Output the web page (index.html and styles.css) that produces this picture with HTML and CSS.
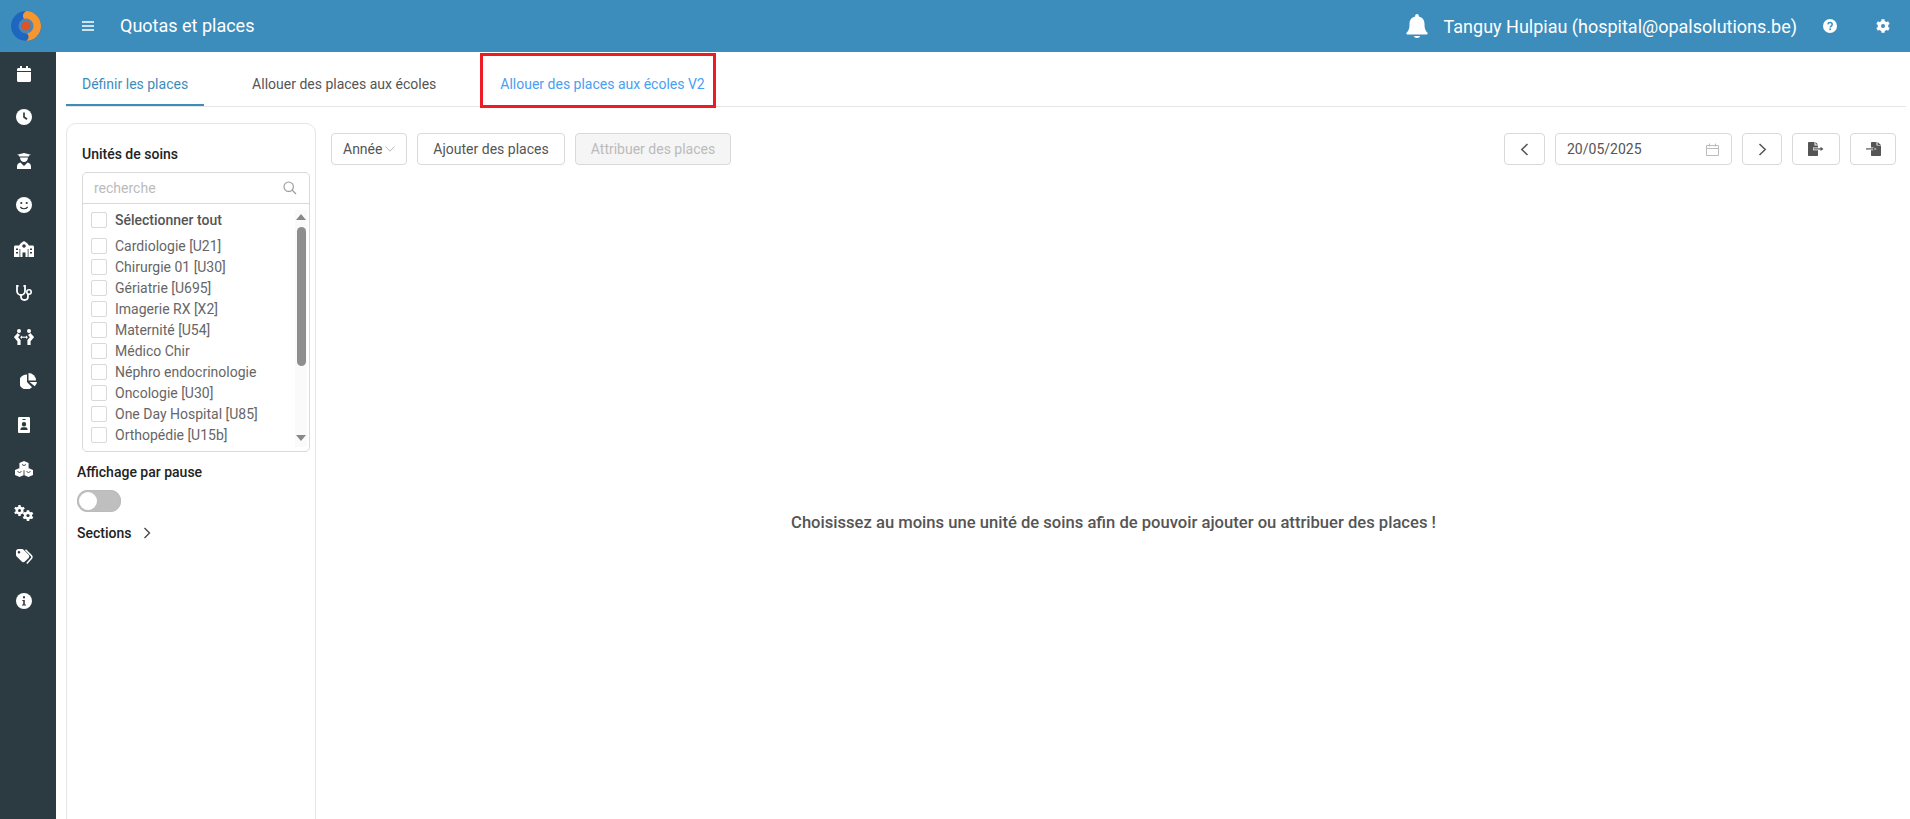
FILE: index.html
```html
<!DOCTYPE html>
<html lang="fr">
<head>
<meta charset="utf-8">
<title>Quotas et places</title>
<link rel="stylesheet" href="styles.css">
</head>
<body>
<div class="app">
  <header class="topbar">
    <div class="logo">
      <svg width="30" height="30" viewBox="0 0 30 30">
        <circle cx="15" cy="15" r="15" fill="#1f66c0"/>
        <path d="M15 0a15 15 0 0 1 0 30c3-2 3.500-5 1-7.500-1-1-1-1.500 0-2.500 5-2 5-8 0-10-2-1-4-2-4-5 0-2 1-3.500 3-5z" fill="#f7962e"/>
        <circle cx="15" cy="15" r="7.500" fill="#4a86b8"/>
        <circle cx="15" cy="15" r="4.500" fill="#dc5426"/>
      </svg>
    </div>
    <svg class="burger" width="12" height="10" viewBox="0 0 12 10"><path d="M0 1h12M0 5h12M0 9h12" stroke="#fff" stroke-width="1.400"/></svg>
    <h1 class="page-title">Quotas et places</h1>
    <div class="top-right">
      <svg class="bell" width="22" height="24" viewBox="0 0 22 24"><path d="M11 0c1 0 1.800.8 1.800 1.800v.8c3.800.8 5.700 3.700 5.700 7.400 0 5 1 6.500 3 8.800.5.600.1 1.700-.8 1.700H1.300c-.9 0-1.300-1.100-.8-1.700 2-2.300 3-3.800 3-8.800 0-3.700 1.900-6.600 5.700-7.400v-.8C9.200.8 10 0 11 0zM8 22h6c0 1.200-1.300 2-3 2s-3-.8-3-2z" fill="#fff"/></svg>
      <span class="user">Tanguy Hulpiau (hospital@opalsolutions.be)</span>
      <svg class="help" width="14" height="14" viewBox="0 0 14 14"><circle cx="7" cy="7" r="7" fill="#fff"/><path d="M4.800 5.300C5 4.200 5.900 3.500 7 3.500c1.300 0 2.200.8 2.200 1.900 0 1.700-2 1.600-2 3.100" fill="none" stroke="#3c8dbc" stroke-width="1.500"/><rect x="6.300" y="9.400" width="1.700" height="1.700" fill="#3c8dbc"/></svg>
      <svg class="gear" width="14" height="14" viewBox="0 0 14 14"><path d="M7 .2v13.600M1.100 3.600l11.800 6.800M12.900 3.600 1.100 10.400" stroke="#fff" stroke-width="3.200"/><circle cx="7" cy="7" r="5.300" fill="#fff"/><circle cx="7" cy="7" r="2" fill="#3c8dbc"/></svg>
    </div>
  </header>

  <div class="layout">
    <nav class="sidebar">
      <a class="nav-item"><svg width="14" height="16" viewBox="0 0 14 16"><path d="M3 0h2v2h4V0h2v2h1.500C13.300 2 14 2.700 14 3.500V5H0V3.500C0 2.700.7 2 1.500 2H3zM0 6h14v8.500c0 .8-.7 1.500-1.500 1.500h-11C.7 16 0 15.300 0 14.500z" fill="#fff"/></svg></a>
      <a class="nav-item"><svg width="16" height="16" viewBox="0 0 16 16"><circle cx="8" cy="8" r="8" fill="#fff"/><path d="M8 3.500V8l3 2.200" fill="none" stroke="#2c3b41" stroke-width="1.700"/></svg></a>
      <a class="nav-item"><svg width="14" height="16" viewBox="0 0 14 16"><path d="M0 1.800 7 0l7 1.800-2 .6v1.200H2V2.400z" fill="#fff"/><path d="M3 4.500h8C11 7 9.300 9 7 9S3 7 3 4.500zM3.500 9.500 7 13l3.500-3.500c2 .3 3.500 2 3.500 4V16H0v-2.500c0-2 1.500-3.700 3.500-4z" fill="#fff"/></svg></a>
      <a class="nav-item"><svg width="16" height="16" viewBox="0 0 16 16"><circle cx="8" cy="8" r="8" fill="#fff"/><circle cx="5.300" cy="6" r="1.100" fill="#2c3b41"/><circle cx="10.700" cy="6" r="1.100" fill="#2c3b41"/><path d="M4.300 10c2 2.300 5.400 2.300 7.400 0" fill="none" stroke="#2c3b41" stroke-width="1.200"/></svg></a>
      <a class="nav-item"><svg width="20" height="16" viewBox="0 0 20 16"><path d="M0 6c0-.8.600-1.500 1.300-1.500H5L7 2l3-2 3 2 2 2.500h3.700c.7 0 1.300.7 1.300 1.500v10H0z" fill="#fff"/><circle cx="10" cy="5" r="1.800" fill="#2c3b41"/><path d="M8.500 11.500h3V16h-3zM2 7.500h2V9H2zM2 11h2v1.500H2zM16 7.500h2V9h-2zM16 11h2v1.500h-2zM5.500 8h.8v8h-.8zM13.700 8h.8v8h-.8z" fill="#2c3b41"/></svg></a>
      <a class="nav-item"><svg width="17" height="16" viewBox="0 0 17 16"><path d="M2.500 1H1v5c0 2.500 2 4 4 4s4-1.500 4-4V1H7.500" fill="none" stroke="#fff" stroke-width="1.800"/><path d="M5 10v1.500C5 13.700 6.500 15 8.500 15s3.500-1.300 3.500-3.500V9" fill="none" stroke="#fff" stroke-width="1.800"/><circle cx="13" cy="7" r="2.200" fill="none" stroke="#fff" stroke-width="1.600"/></svg></a>
      <a class="nav-item"><svg width="20" height="16" viewBox="0 0 20 16"><circle cx="5" cy="2" r="2" fill="#fff"/><circle cx="15" cy="2" r="2" fill="#fff"/><path d="M4.800 5 2 8.200l3 3.500V16M15.200 5 18 8.200l-3 3.500V16" fill="none" stroke="#fff" stroke-width="3.200"/><path d="M7 8.200h6" stroke="#fff" stroke-width="1.200"/><path d="M8 6.500 6 8.200l2 1.700zM12 6.500l2 1.700-2 1.700z" fill="#fff"/></svg></a>
      <a class="nav-item nav-pie"><svg width="17" height="16" viewBox="0 0 17 16"><path d="M7 1.500V9l5 5.200A7.500 7.500 0 1 1 7 1.500z" fill="#fff"/><path d="M8.500 0A7.500 7.500 0 0 1 16 7.500H8.500z" fill="#fff"/><path d="M9.500 9H17a7.500 7.500 0 0 1-2.300 4.300z" fill="#fff"/></svg></a>
      <a class="nav-item"><svg width="12" height="16" viewBox="0 0 12 16"><path fill-rule="evenodd" d="M1.200 0h9.600C11.500 0 12 .6 12 1.300v13.400c0 .7-.5 1.300-1.200 1.300H1.200C.5 16 0 15.400 0 14.700V1.300C0 .6.500 0 1.200 0zM4.500 2v1h3V2zM6 5a2.200 2.200 0 1 0 0 4.400A2.200 2.200 0 0 0 6 5zM2.500 13h7v-1c0-1-1-1.800-2-1.800h-3c-1 0-2 .8-2 1.800z" fill="#fff"/></svg></a>
      <a class="nav-item"><svg width="18" height="16" viewBox="0 0 18 16"><path d="M9 0l4.600 2v5L9 9 4.400 7V2zM4.600 7l4.400 2v5l-4.400 2L0 14V9zM13.400 7 18 9v5l-4.600 2L9 14V9z" fill="#fff"/><path d="M7 3.500 9 4.500l2-1M2.500 10.500l2 1 2-1M11.500 10.500l2 1 2-1M9 9.300v4.700" fill="none" stroke="#2c3b41" stroke-width=".9"/></svg></a>
      <a class="nav-item"><svg width="20" height="16" viewBox="0 0 20 16"><path d="M5.500 0v11M.8 2.800l9.400 5.400M10.200 2.800.8 8.200" stroke="#fff" stroke-width="2.400"/><circle cx="5.500" cy="5.500" r="3.900" fill="#fff"/><circle cx="5.500" cy="5.500" r="1.500" fill="#2c3b41"/><path d="M14 5v11M9.200 7.700l9.600 5.600M18.800 7.700l-9.600 5.600" stroke="#2c3b41" stroke-width="4"/><path d="M14 5.200v10.800M9.300 7.800l9.400 5.400M18.700 7.800l-9.400 5.400" stroke="#fff" stroke-width="2.600"/><circle cx="14" cy="10.500" r="4" fill="#fff"/><circle cx="14" cy="10.500" r="1.600" fill="#2c3b41"/></svg></a>
      <a class="nav-item"><svg width="17" height="16" viewBox="0 0 17 16"><path fill-rule="evenodd" d="M0 2.300C0 1 1 0 2.300 0H6c.6 0 1.200.2 1.600.7l5 5c.9.900.9 2.300 0 3.200l-3.700 3.700c-.9.900-2.300.9-3.200 0l-5-5C.2 7.200 0 6.600 0 6zM3 2a1.300 1.300 0 1 0 0 2.600A1.300 1.300 0 0 0 3 2z" fill="#fff"/><path d="M9.500 .8l5.800 5.800c.9.900.9 2.100 0 3l-4.500 5" fill="none" stroke="#fff" stroke-width="1.500"/></svg></a>
      <a class="nav-item"><svg width="16" height="16" viewBox="0 0 16 16"><circle cx="8" cy="8" r="8" fill="#fff"/><rect x="7" y="3.300" width="2" height="2" fill="#2c3b41"/><path d="M6.300 7h2.500v4.500h1.200v1H6v-1h1.200V8H6.300z" fill="#2c3b41"/></svg></a>
    </nav>

    <main class="main">
      <div class="tabs">
        <a class="tab tab-active">Définir les places</a>
        <a class="tab">Allouer des places aux écoles</a>
        <a class="tab tab-marked">Allouer des places aux écoles V2</a>
      </div>

      <div class="content">
        <aside class="filter-panel">
          <h2 class="filter-title">Unités de soins</h2>
          <div class="picker">
            <div class="picker-search">
              <span class="placeholder">recherche</span>
              <svg width="14" height="14" viewBox="0 0 14 14"><circle cx="5.700" cy="5.700" r="4.700" fill="none" stroke="#999" stroke-width="1.100"/><path d="M9.200 9.200 13 13" stroke="#999" stroke-width="1.200"/></svg>
            </div>
            <div class="picker-body">
              <div class="picker-list">
                <label class="row row-all"><span class="check"></span>Sélectionner tout</label>
                <label class="row"><span class="check"></span>Cardiologie [U21]</label>
                <label class="row"><span class="check"></span>Chirurgie 01 [U30]</label>
                <label class="row"><span class="check"></span>Gériatrie [U695]</label>
                <label class="row"><span class="check"></span>Imagerie RX [X2]</label>
                <label class="row"><span class="check"></span>Maternité [U54]</label>
                <label class="row"><span class="check"></span>Médico Chir</label>
                <label class="row"><span class="check"></span>Néphro endocrinologie</label>
                <label class="row"><span class="check"></span>Oncologie [U30]</label>
                <label class="row"><span class="check"></span>One Day Hospital [U85]</label>
                <label class="row"><span class="check"></span>Orthopédie [U15b]</label>
              </div>
              <div class="scrollbar">
                <span class="arrow-up"></span>
                <span class="thumb"></span>
                <span class="arrow-down"></span>
              </div>
            </div>
          </div>
          <div class="pause-label">Affichage par pause</div>
          <div class="toggle"><span class="knob"></span></div>
          <div class="sections">Sections
            <svg width="8" height="12" viewBox="0 0 8 12"><path d="M1.500 1l5 5-5 5" fill="none" stroke="#444" stroke-width="1.300"/></svg>
          </div>
        </aside>

        <section class="workspace">
          <div class="toolbar">
            <button class="btn btn-year">Année<svg width="10" height="6" viewBox="0 0 10 6"><path d="M.5.500 5 5.200 9.500.5" fill="none" stroke="#bbb"/></svg></button>
            <button class="btn btn-add">Ajouter des places</button>
            <button class="btn btn-disabled">Attribuer des places</button>
            <div class="toolbar-right">
              <button class="btn btn-prev"><svg width="9" height="13" viewBox="0 0 9 13"><path d="M7.500 1 1.800 6.500l5.700 5.500" fill="none" stroke="#555" stroke-width="1.500"/></svg></button>
              <div class="date-field"><span>20/05/2025</span>
                <svg width="13" height="13" viewBox="0 0 13 13"><path d="M.5 2.500h12v10H.5zM.5 5.500h12M3.500.5v3M9.500.5v3" fill="none" stroke="#bbb"/></svg>
              </div>
              <button class="btn btn-next"><svg width="9" height="13" viewBox="0 0 9 13"><path d="M1.500 1l5.700 5.500L1.500 12" fill="none" stroke="#555" stroke-width="1.500"/></svg></button>
              <button class="btn btn-export"><svg width="16" height="14" viewBox="0 0 16 14"><path d="M1 0h5.500v3.500H10V13c0 .6-.4 1-1 1H1c-.6 0-1-.4-1-1V1c0-.6.400-1 1-1zM7.500 0 10 2.500H7.500z" fill="#555"/><path d="M5 5.500h6v2.800H5z" fill="#fff"/><path d="M5.500 6.900h8" stroke="#555" stroke-width="1.200"/><path d="M12.500 4.700l3 2.200-3 2.200z" fill="#555"/></svg></button>
              <button class="btn btn-import"><svg width="15" height="14" viewBox="0 0 15 14"><path d="M5 1c0-.6.400-1 1-1h4.500v3.500H15V13c0 .6-.4 1-1 1H6c-.6 0-1-.4-1-1zM11.500 0 15 3h-3.500z" fill="#555"/><path d="M4 5.500h3.500l3.200 1.400-3.200 1.400H4z" fill="#fff"/><path d="M0 6.900h7.500" stroke="#555" stroke-width="1.200"/><path d="M7 5.200l2.400 1.700L7 8.600z" fill="#555"/></svg></button>
            </div>
          </div>
          <div class="empty-message">Choisissez au moins une unité de soins afin de pouvoir ajouter ou attribuer des places !</div>
        </section>
      </div>
    </main>
  </div>
</div>
</body>
</html>
```
FILE: styles.css
```css
* { box-sizing: border-box; }
html, body { margin: 0; height: 100%; }
body { font-family: Roboto, "Liberation Sans", sans-serif; font-size: 14px; color: #555; background: #fff; overflow: hidden; }
.app { display: flex; flex-direction: column; height: 819px; overflow: hidden; }

.topbar { display: flex; align-items: center; flex: 0 0 52px; background: #3c8dbc; color: #fff; }
.logo { width: 56px; display: flex; justify-content: center; padding-right: 4px; }
.logo svg { display: block; }
.burger { margin-left: 26px; }
.page-title { margin: 0 0 0 26px; font-size: 18px; font-weight: 400; line-height: 24px; }
.top-right { margin-left: auto; display: flex; align-items: center; padding-right: 20px; }
.bell { margin-right: 16px; }
.user { font-size: 18px; margin-right: 26px; }
.help { margin-right: 39px; }

.layout { flex: 1; display: flex; min-height: 0; }
.sidebar { width: 56px; background: #2c3b41; display: flex; flex-direction: column; }
.nav-item { flex: 0 0 44px; width: 48px; display: flex; align-items: center; justify-content: center; }
.nav-item:first-child { flex-basis: 43px; }
.nav-pie { margin-left: 4px; }

.main { flex: 1; display: flex; flex-direction: column; padding: 0 4px 0 10px; min-width: 0; }
.tabs { display: flex; flex: 0 0 54px; border-bottom: 1px solid #e6e6e6; }
.tab { position: relative; height: 54px; padding: 23px 16px 0; margin-right: 32px; line-height: 18px; color: #555; font-size: 14px; }
.tab-active { color: #3c8dbc; border-bottom: 2px solid #3c8dbc; }
.tab-marked { color: #4aa0f0; }
.tab-marked::after { content: ""; position: absolute; left: -4px; top: 1px; box-sizing: border-box; width: 236px; height: 55px; border: 3px solid #ed1c24; }

.content { flex: 1; display: flex; padding-top: 16px; min-height: 0; }
.filter-panel { flex: 0 0 250px; height: 760px; padding: 21px 5px 0 10px; border: 1px solid #e6e6e6; border-radius: 10px; }
.filter-title { margin: 0 0 9px 5px; font-size: 14px; font-weight: 500; line-height: 18px; color: #222; }
.picker { margin-left: 5px; width: 228px; height: 280px; border: 1px solid #d9d9d9; border-radius: 5px; display: flex; flex-direction: column; overflow: hidden; }
.picker-search { flex: 0 0 31px; display: flex; align-items: center; justify-content: space-between; padding: 0 12px 0 11px; border-bottom: 1px solid #d9d9d9; }
.placeholder { color: #bbb; font-size: 14px; }
.picker-body { flex: 1; display: flex; min-height: 0; }
.picker-list { flex: 1; padding: 4px 0 0 8px; }
.row { display: flex; align-items: center; height: 21px; font-size: 14px; color: #666; white-space: nowrap; }
.row-all { font-weight: 500; height: 23px; margin-bottom: 4px; color: #555; }
.check { flex: 0 0 16px; height: 16px; margin-right: 8px; border: 1px solid #d9d9d9; border-radius: 2px; background: #fff; }
.scrollbar { position: relative; width: 12px; margin-right: 2px; margin-top: 6px; background: #fafafa; display: flex; flex-direction: column; align-items: center; height: 237px; }
.thumb { width: 9px; height: 139px; margin-top: 17px; background: #8e8e8e; border-radius: 5px; }
.arrow-up { position: absolute; top: 4px; border: 5px solid transparent; border-top: 0; border-bottom: 6px solid #888; }
.arrow-down { position: absolute; bottom: 6px; border: 5px solid transparent; border-bottom: 0; border-top: 6px solid #888; }
.pause-label { margin-top: 11px; font-size: 14px; font-weight: 500; line-height: 18px; color: #222; }
.toggle { position: relative; width: 44px; height: 22px; margin-top: 9px; border-radius: 11px; background: #bfbfbf; box-shadow: inset 0 0 1px #999; }
.knob { position: absolute; left: 2px; top: 2px; width: 18px; height: 18px; border-radius: 50%; background: #fff; }
.sections { display: flex; align-items: center; gap: 12px; margin-top: 12px; font-size: 14px; font-weight: 500; line-height: 18px; color: #222; }

.workspace { flex: 1; min-width: 0; display: flex; flex-direction: column; margin: 0 10px 0 15px; padding-top: 10px; }
.toolbar { display: flex; gap: 10px; flex: 0 0 32px; }
.btn { height: 32px; padding: 0; display: flex; align-items: center; justify-content: center; background: #fff; border: 1px solid #d9d9d9; border-radius: 4px; font-family: inherit; font-size: 14px; color: #555; }
.btn-year { width: 76px; justify-content: flex-start; padding-left: 11px; gap: 3px; }
.btn-add { width: 148px; }
.btn-disabled { width: 156px; background: #f5f5f5; color: #bbb; }
.toolbar-right { margin-left: auto; display: flex; gap: 10px; }
.btn-prev { width: 41px; }
.btn-next { width: 40px; }
.btn-export { width: 48px; }
.btn-import { width: 46px; }
.date-field { width: 177px; height: 32px; display: flex; align-items: center; justify-content: space-between; padding: 0 12px 0 11px; border: 1px solid #d9d9d9; border-radius: 4px; font-size: 14px; color: #555; }
.empty-message { margin-top: 346px; text-align: center; font-size: 16.6px; font-weight: 500; line-height: 24px; color: #555; }
```
